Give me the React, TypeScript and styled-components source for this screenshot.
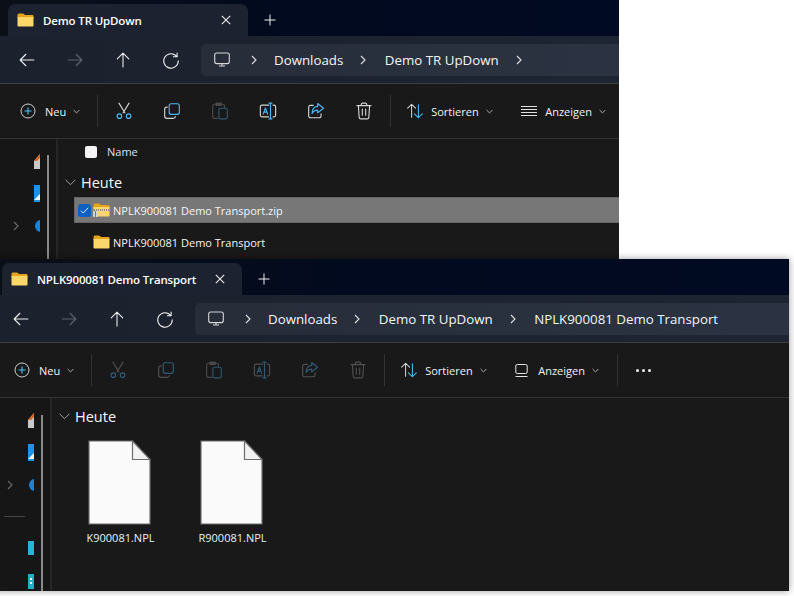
import React from "react";
import { createGlobalStyle, styled } from "styled-components";

const Global = createGlobalStyle`
  html, body {
    margin: 0;
    width: 794px;
    height: 596px;
    overflow: hidden;
    background: #fff;
    font-family: "Open Sans", "Noto Sans", sans-serif;
  }
`;

const Desktop = styled.div`
  position: relative;
  width: 794px;
  height: 596px;
  overflow: hidden;
`;

const Win = styled.div<{ $left: number; $top: number; $w: number; $h: number; $shadow?: boolean }>`
  position: absolute;
  left: ${(p) => p.$left}px;
  top: ${(p) => p.$top}px;
  width: ${(p) => p.$w}px;
  height: ${(p) => p.$h}px;
  display: flex;
  flex-direction: column;
  overflow: hidden;
  background: #191919;
  color: #fff;
  box-shadow: ${(p) => (p.$shadow ? "0 0 7px rgba(0,0,0,.4)" : "none")};
  svg {
    flex: none;
  }
`;

const TabStrip = styled.div`
  height: 36px;
  flex: none;
  display: flex;
  align-items: flex-end;
  padding-left: 8px;
  background: linear-gradient(90deg, #0b0f17 0, #020a1f 45%, #000a22 100%);
`;

const Tab = styled.div`
  width: 240px;
  height: 32px;
  box-sizing: border-box;
  display: flex;
  align-items: center;
  padding: 0 17px 0 9px;
  border-radius: 7px 7px 0 0;
  background: #1c2230;
`;

const TabTitle = styled.span`
  flex: 1;
  margin-left: 9px;
  font-size: 11.5px;
  font-weight: 600;
  white-space: nowrap;
  letter-spacing: -0.15px;
`;

const PlusBtn = styled.div`
  margin: 0 0 4px 16px;
  height: 24px;
  display: flex;
  align-items: center;
`;

const AddressRow = styled.div`
  height: 48px;
  flex: none;
  box-sizing: border-box;
  display: flex;
  align-items: center;
  padding: 0 0 0 17px;
  background: linear-gradient(90deg, #1b212d 0, #1e2532 100%);
  border-bottom: 1px solid #3d3f42;
`;

const NavBtn = styled.div`
  width: 48px;
  flex: none;
  display: flex;
`;

const Crumbs = styled.div`
  margin-left: -8px;
  flex: 1;
  height: 32px;
  display: flex;
  align-items: center;
  padding-left: 13px;
  border-radius: 5px 0 0 5px;
  background: linear-gradient(90deg, #272d39 0, #2b3342 100%);
  font-size: 13.3px;
  white-space: nowrap;
  color: #f4f5f6;
`;

const CrumbSep = styled.span<{ $first?: boolean }>`
  display: flex;
  margin: ${(p) => (p.$first ? "0 17px 0 21px" : "0 18.5px 0 17px")};
`;

const CommandBar = styled.div`
  height: 55px;
  flex: none;
  box-sizing: border-box;
  display: flex;
  align-items: center;
  padding-left: 20px;
  background: #191919;
  border-bottom: 1px solid #343434;
`;

const Sep = styled.div<{ $ml: number; $mr: number }>`
  width: 1px;
  height: 32px;
  flex: none;
  background: #333;
  margin: 0 ${(p) => p.$mr}px 0 ${(p) => p.$ml}px;
`;

const CmdBtn = styled.div`
  width: 48px;
  flex: none;
  display: flex;
  justify-content: center;
`;

const CmdLabel = styled.span<{ $ml: number }>`
  margin: 0 7px 0 ${(p) => p.$ml}px;
  font-size: 11px;
  color: #f2f2f2;
  white-space: nowrap;
`;

const Group = styled.div<{ $w: number }>`
  width: ${(p) => p.$w}px;
  flex: none;
  display: flex;
  align-items: center;
`;

const Dots = styled.div`
  display: flex;
  gap: 3px;
  margin-left: 18px;
`;

const Dot = styled.i`
  width: 3px;
  height: 3px;
  border-radius: 50%;
  background: #f0f0f0;
`;

const Body = styled.div`
  flex: 1;
  display: flex;
  min-height: 0;
`;

const Sidebar = styled.div`
  width: 58px;
  flex: none;
  box-sizing: border-box;
  display: flex;
  background: #161616;
  border-right: 2px solid #262626;
`;

const NavList = styled.div`
  width: 47px;
  flex: none;
  box-sizing: border-box;
  padding-top: 7px;
`;

const NavItem = styled.div`
  height: 32px;
  display: flex;
  align-items: center;
  padding-left: 13px;
`;

const NavIconClip = styled.div`
  width: 6px;
  height: 20px;
  overflow: hidden;
  flex: none;
  margin-left: 14px;
`;

const ChevSlot = styled.div`
  width: 7px;
  flex: none;
  display: flex;
`;

const NavDivider = styled.div`
  height: 1px;
  margin: 0 16px 0 10px;
  background: #444;
`;

const DividerRow = styled.div`
  height: 32px;
  box-sizing: border-box;
  padding-bottom: 2px;
  display: flex;
  flex-direction: column;
  justify-content: center;
`;

const Scroll = styled.div<{ $mt: number }>`
  width: 2px;
  margin-top: ${(p) => p.$mt}px;
  background: #8a8a8a;
`;

const Content = styled.div`
  flex: 1;
  min-width: 0;
  box-sizing: border-box;
  padding-left: 6px;
  display: flex;
  flex-direction: column;
`;

const ColumnHead = styled.div`
  height: 25px;
  display: flex;
  align-items: center;
  padding-left: 21px;
  font-size: 11px;
  color: #cfe6f5;
`;

const HeadCheck = styled.div`
  width: 12px;
  height: 12px;
  border-radius: 2px;
  background: #f4f4f4;
  margin-right: 10px;
`;

const GroupHead = styled.div<{ $mt: number }>`
  height: 24px;
  margin-top: ${(p) => p.$mt}px;
  display: flex;
  align-items: center;
  padding-left: 1px;
  font-size: 14.5px;
  color: #f4f8fb;
`;

const GroupTitle = styled.span`
  margin-left: 5px;
`;

const Row = styled.div<{ $selected?: boolean }>`
  height: 26px;
  box-sizing: border-box;
  margin: ${(p) => (p.$selected ? "3px 0 6px 10px" : "0 0 0 10px")};
  display: flex;
  align-items: center;
  padding-left: 3px;
  font-size: 11px;
  color: #f5f5f5;
  white-space: nowrap;
  background: ${(p) => (p.$selected ? "#777" : "transparent")};
  border: 1px solid ${(p) => (p.$selected ? "#666" : "transparent")};
  border-right: 0;
`;

const RowCheck = styled.div<{ $on?: boolean }>`
  width: 13px;
  height: 13px;
  margin-right: 2px;
  border-radius: 3px;
  flex: none;
  display: flex;
  align-items: center;
  justify-content: center;
  background: ${(p) => (p.$on ? "#0d5fc2" : "transparent")};
`;

const RowName = styled.span`
  margin-left: 3px;
`;

const FileGrid = styled.div`
  display: flex;
  gap: 42px;
  padding: 12px 0 0 26px;
`;

const FileTile = styled.div`
  width: 70px;
  display: flex;
  flex-direction: column;
  align-items: center;
  font-size: 11px;
  color: #e8f0f6;
`;

const FileLabel = styled.span`
  margin: 5px 0 0 3px;
`;

type StrokeProps = { c?: string; a?: string };

const FolderIcon = ({ zip }: { zip?: boolean }) => (
  <svg width="17" height="14" viewBox="0 0 17 14">
    <path d="M.5 2.200C.5 1 1.200.5 2 .5h3.600c.6 0 1 .2 1.400.6l1 1h7.300c.7 0 1.200.5 1.200 1.200V5H.5z" fill="#e5a41c" />
    <path d="M.5 4h16v8.400c0 .7-.5 1.200-1.200 1.200H1.700C1 13.600.5 13.100.5 12.400z" fill="#fcd769" />
    {zip && <path d="M1 7h15" stroke="#8f8a70" strokeWidth="2" strokeDasharray="1 1" />}
    {zip && <rect x="0" y="8" width="5" height="6" rx="1" fill="#d4d4d4" />}
    {zip && <path d="M2.500 8v6" stroke="#777" />}
  </svg>
);

const Base = ({ s = 16, children }: { s?: number; children: React.ReactNode }) => (
  <svg width={s} height={s} viewBox="0 0 16 16" fill="none" strokeWidth="1" strokeLinecap="round" strokeLinejoin="round">
    {children}
  </svg>
);

const CloseIcon = () => (
  <svg width="10" height="10" viewBox="0 0 10 10" stroke="#eee" strokeWidth="1.100" fill="none">
    <path d="M.8.8l8.400 8.400M9.200.8L.8 9.200" />
  </svg>
);

const PlusIcon = () => (
  <svg width="12" height="12" viewBox="0 0 12 12" stroke="#eee" strokeWidth="1" fill="none">
    <path d="M6 .5v11M.5 6h11" />
  </svg>
);

const ArrowLeft = ({ c = "#f0f0f0" }: StrokeProps) => (
  <Base s={20}>
    <path d="M2.500 8h11M2.500 8l4.600-4.600M2.500 8l4.600 4.600" stroke={c} strokeWidth=".85" />
  </Base>
);

const ArrowRight = ({ c = "#5f646c" }: StrokeProps) => (
  <Base s={20}>
    <path d="M13.500 8h-11M13.500 8L8.900 3.400M13.500 8l-4.600 4.600" stroke={c} strokeWidth=".85" />
  </Base>
);

const ArrowUp = ({ c = "#f0f0f0" }: StrokeProps) => (
  <Base s={20}>
    <path d="M8 13.500v-11M8 2.500L3.400 7.100M8 2.500l4.600 4.600" stroke={c} strokeWidth=".85" />
  </Base>
);

const RefreshIcon = ({ c = "#f0f0f0" }: StrokeProps) => (
  <Base s={20}>
    <path d="M12.600 5.200A5.800 5.800 0 1 0 13.800 8.600M12.900 2.400v3h-3" stroke={c} strokeWidth=".85" />
  </Base>
);

const MonitorIcon = () => (
  <svg width="16" height="16" viewBox="0 0 16 16" fill="none" stroke="#d8d8d8" strokeWidth="1.100">
    <rect x=".7" y="1" width="14.600" height="10.600" rx="2" />
    <path d="M5 14h6M8 12v2" />
  </svg>
);

const Chevron = ({ c = "#e0e0e0" }: StrokeProps) => (
  <svg width="6" height="10" viewBox="0 0 6 10" fill="none" stroke={c} strokeWidth="1.100">
    <path d="M1 1l4 4-4 4" />
  </svg>
);

const SmallDown = () => (
  <svg width="7" height="5" viewBox="0 0 7 5" fill="none" stroke="#aaa" strokeWidth="1">
    <path d="M.6 1l2.900 2.900L6.400 1" />
  </svg>
);

const GroupChevron = () => (
  <svg width="11" height="7" viewBox="0 0 11 7" fill="none" stroke="#a0a0a0" strokeWidth="1">
    <path d="M.6.8l4.900 4.900L10.400.8" />
  </svg>
);

const NewIcon = () => (
  <svg width="16" height="16" viewBox="0 0 16 16" fill="none">
    <circle cx="8" cy="8" r="7" stroke="#cfcfcf" strokeWidth="1" />
    <path d="M8 4.500v7M4.500 8h7" stroke="#4cc2ff" strokeWidth="1.100" />
  </svg>
);

const CutIcon = ({ c, a }: StrokeProps) => (
  <Base s={18}>
    <path d="M3.500 1l5.300 8.600M12.500 1L7.200 9.600" stroke={c} />
    <circle cx="3.900" cy="12.600" r="2" stroke={a} />
    <circle cx="12.100" cy="12.600" r="2" stroke={a} />
  </Base>
);

const CopyIcon = ({ c, a }: StrokeProps) => (
  <Base s={18}>
    <rect x="5.500" y="1.500" width="9" height="9.500" rx="1.800" stroke={a} />
    <path d="M3.800 4.500h-.5A1.800 1.800 0 0 0 1.500 6.300v6.400a1.800 1.800 0 0 0 1.800 1.800h6a1.800 1.800 0 0 0 1.700-1.500" stroke={c} />
  </Base>
);

const PasteIcon = ({ c, a }: StrokeProps) => (
  <Base s={18}>
    <path d="M6 14.500H3A1.500 1.500 0 0 1 1.500 13V3.500A1.500 1.500 0 0 1 3 2h7.500A1.500 1.500 0 0 1 12 3.500V5M4.500 1h4.500v2H4.500z" stroke={c} />
    <rect x="7" y="5.500" width="7.500" height="9.500" rx="1.300" stroke={a} />
  </Base>
);

const RenameIcon = ({ c, a }: StrokeProps) => (
  <Base s={18}>
    <path d="M8.500 2.800H2.700A1.500 1.500 0 0 0 1.200 4.300v7.400a1.500 1.500 0 0 0 1.500 1.500h5.800M12.500 2.800h.8a1.500 1.500 0 0 1 1.500 1.500v7.400a1.500 1.500 0 0 1-1.500 1.500h-.8" stroke={c} />
    <path d="M8.900 1h2.600M10.200 1v14M8.900 15h2.600M3.700 10.800l2-5.500 2 5.500M4.400 9h2.600" stroke={a} />
  </Base>
);

const ShareIcon = ({ c, a }: StrokeProps) => (
  <Base s={18}>
    <path d="M5.500 3H3A1.500 1.500 0 0 0 1.500 4.500v8A1.500 1.500 0 0 0 3 14h8a1.500 1.500 0 0 0 1.500-1.500V10.500" stroke={c} />
    <path d="M9.500 1.300l5.200 4.200-5.200 4.200V7.200c-2.400 0-3.900 1-5 3 0-3.800 1.800-6 5-6.300z" stroke={a} />
  </Base>
);

const TrashIcon = ({ c }: StrokeProps) => (
  <Base s={18}>
    <path d="M1.800 3.200h12.400M5.500 3.200V2.300A1.300 1.300 0 0 1 6.800 1h2.400a1.300 1.300 0 0 1 1.300 1.300v.9M3 3.200l.7 10.300a1.500 1.500 0 0 0 1.500 1.500h5.600a1.500 1.500 0 0 0 1.500-1.500L13 3.200M6.500 6.300v5.500M9.500 6.300v5.500" stroke={c} />
  </Base>
);

const SortIcon = () => (
  <Base s={18}>
    <path d="M5 13.500V2M5 2L1.500 5.500M5 2l3.500 3.500" stroke="#d8d8d8" strokeWidth=".9" />
    <path d="M11 2.500V14M11 14l-3.500-3.500M11 14l3.500-3.500" stroke="#4cc2ff" strokeWidth=".9" />
  </Base>
);

const ListIcon = () => (
  <svg width="16" height="10" viewBox="0 0 16 10" stroke="#e0e0e0" strokeWidth="1" fill="none">
    <path d="M0 .5h16M0 3.500h16M0 6.500h16M0 9.500h16" />
  </svg>
);

const ViewIcon = () => (
  <svg width="13" height="13" viewBox="0 0 13 13" stroke="#e4e4e4" strokeWidth="1" fill="none">
    <rect x=".8" y=".5" width="11.400" height="9" rx="1.500" />
    <path d="M.5 12.500h12" />
  </svg>
);

const Check = () => (
  <svg width="9" height="7" viewBox="0 0 9 7" fill="none" stroke="#dbe9fb" strokeWidth="1">
    <path d="M.8 3.600l2.400 2.400L8.200.8" />
  </svg>
);

const FileIcon = () => (
  <svg width="63" height="85" viewBox="0 0 63 85" fill="none">
    <path d="M1 1h43.500L62 19.500V84H1z" fill="#fafafa" stroke="#6b6b6b" strokeWidth="1.200" />
    <path d="M44.500 1v18.500H62z" fill="#f2f2f2" stroke="#6b6b6b" strokeWidth="1.200" />
  </svg>
);

const NavGlyph = ({ kind }: { kind: string }) => {
  if (kind === "doc")
    return (
      <svg width="6" height="20" viewBox="0 0 6 20">
        <path d="M0 9L6 2v15H0z" fill="#c9c9c9" />
        <path d="M0 9L6 2v4L3 9z" fill="#d9661f" />
      </svg>
    );
  if (kind === "img")
    return (
      <svg width="6" height="20" viewBox="0 0 6 20">
        <rect width="6" height="17" y="1" fill="#1e92e6" />
        <path d="M0 16l6-6v6z" fill="#eef5fb" />
      </svg>
    );
  if (kind === "disc")
    return (
      <svg width="6" height="20" viewBox="0 0 6 20">
        <circle cx="7" cy="10" r="6" fill="#1883d7" />
      </svg>
    );
  if (kind === "video")
    return (
      <svg width="6" height="20" viewBox="0 0 6 20">
        <rect width="6" height="14" y="2" fill="#25b6d6" />
      </svg>
    );
  return (
    <svg width="6" height="20" viewBox="0 0 6 20">
      <rect width="6" height="15" y="3" fill="#1fb0c8" />
      <rect x="2" y="7" width="2" height="2" fill="#e8f8fb" />
      <rect x="2" y="11" width="2" height="2" fill="#e8f8fb" />
    </svg>
  );
};

const active = { c: "#d4d4d4", a: "#4cb8f5" };
const pasteDim = { c: "#4a4a4a", a: "#2c5872" };
const dimmed = { c: "#505050", a: "#2f5c78" };

type WinProps = {
  left: number;
  top: number;
  width: number;
  height: number;
  shadow?: boolean;
  title: string;
  crumbs: string[];
  trailingSep?: boolean;
  disabled?: boolean;
  more?: boolean;
  navKinds: string[];
  scrollTop: number;
  children: React.ReactNode;
};

const ExplorerWindow = ({
  left,
  top,
  width,
  height,
  shadow,
  title,
  crumbs,
  trailingSep,
  disabled,
  more,
  navKinds,
  scrollTop,
  children,
}: WinProps) => {
  const t = disabled ? dimmed : active;
  return (
    <Win $left={left} $top={top} $w={width} $h={height} $shadow={shadow}>
      <TabStrip>
        <Tab>
          <FolderIcon />
          <TabTitle>{title}</TabTitle>
          <CloseIcon />
        </Tab>
        <PlusBtn>
          <PlusIcon />
        </PlusBtn>
      </TabStrip>
      <AddressRow>
        <NavBtn><ArrowLeft /></NavBtn>
        <NavBtn><ArrowRight /></NavBtn>
        <NavBtn><ArrowUp /></NavBtn>
        <NavBtn><RefreshIcon /></NavBtn>
        <Crumbs>
          <MonitorIcon />
          <CrumbSep $first><Chevron /></CrumbSep>
          {crumbs.map((c, i) => (
            <React.Fragment key={c}>
              <span>{c}</span>
              {(i < crumbs.length - 1 || trailingSep) && (
                <CrumbSep><Chevron /></CrumbSep>
              )}
            </React.Fragment>
          ))}
        </Crumbs>
      </AddressRow>
      <CommandBar>
        <NewIcon />
        <CmdLabel $ml={9}>Neu</CmdLabel>
        <SmallDown />
        <Sep $ml={17} $mr={2} />
        <CmdBtn><CutIcon {...t} /></CmdBtn>
        <CmdBtn><CopyIcon {...t} /></CmdBtn>
        <CmdBtn><PasteIcon {...pasteDim} /></CmdBtn>
        <CmdBtn><RenameIcon {...t} /></CmdBtn>
        <CmdBtn><ShareIcon {...t} /></CmdBtn>
        <CmdBtn><TrashIcon c={disabled ? "#505050" : "#d4d4d4"} /></CmdBtn>
        <Sep $ml={2} $mr={15} />
        <Group $w={115}>
          <SortIcon />
          <CmdLabel $ml={7}>Sortieren</CmdLabel>
          <SmallDown />
        </Group>
        <Group $w={more ? 102 : 106}>
          {more ? <ViewIcon /> : <ListIcon />}
          <CmdLabel $ml={more ? 10 : 8}>Anzeigen</CmdLabel>
          <SmallDown />
        </Group>
        {more && <Sep $ml={0} $mr={0} />}
        {more && (
          <Dots><Dot /><Dot /><Dot /></Dots>
        )}
      </CommandBar>
      <Body>
        <Sidebar>
          <NavList>
            {navKinds.map((k, i) =>
              k === "divider" ? (
                <DividerRow key={i}><NavDivider /></DividerRow>
              ) : (
                <NavItem key={i}>
                  <ChevSlot>{k === "disc" && <Chevron c="#6a6a6a" />}</ChevSlot>
                  <NavIconClip><NavGlyph kind={k} /></NavIconClip>
                </NavItem>
              )
            )}
          </NavList>
          <Scroll $mt={scrollTop} />
        </Sidebar>
        <Content>{children}</Content>
      </Body>
    </Win>
  );
};

const App = () => (
  <Desktop>
    <Global />
    <ExplorerWindow
      left={0}
      top={0}
      width={619}
      height={262}
      title="Demo TR UpDown"
      crumbs={["Downloads", "Demo TR UpDown"]}
      trailingSep
      navKinds={["doc", "img", "disc"]}
      scrollTop={16}
    >
      <ColumnHead>
        <HeadCheck />
        Name
      </ColumnHead>
      <GroupHead $mt={6}>
        <GroupChevron />
        <GroupTitle>Heute</GroupTitle>
      </GroupHead>
      <Row $selected>
        <RowCheck $on><Check /></RowCheck>
        <FolderIcon zip />
        <RowName>NPLK900081 Demo Transport.zip</RowName>
      </Row>
      <Row>
        <RowCheck />
        <FolderIcon />
        <RowName>NPLK900081 Demo Transport</RowName>
      </Row>
    </ExplorerWindow>
    <ExplorerWindow
      left={-6}
      top={259}
      width={795}
      height={332}
      shadow
      title="NPLK900081 Demo Transport"
      crumbs={["Downloads", "Demo TR UpDown", "NPLK900081 Demo Transport"]}
      disabled
      more
      navKinds={["doc", "img", "disc", "divider", "video", "cube"]}
      scrollTop={17}
    >
      <GroupHead $mt={6}>
        <GroupChevron />
        <GroupTitle>Heute</GroupTitle>
      </GroupHead>
      <FileGrid>
        <FileTile>
          <FileIcon />
          <FileLabel>K900081.NPL</FileLabel>
        </FileTile>
        <FileTile>
          <FileIcon />
          <FileLabel>R900081.NPL</FileLabel>
        </FileTile>
      </FileGrid>
    </ExplorerWindow>
  </Desktop>
);

export default App;
